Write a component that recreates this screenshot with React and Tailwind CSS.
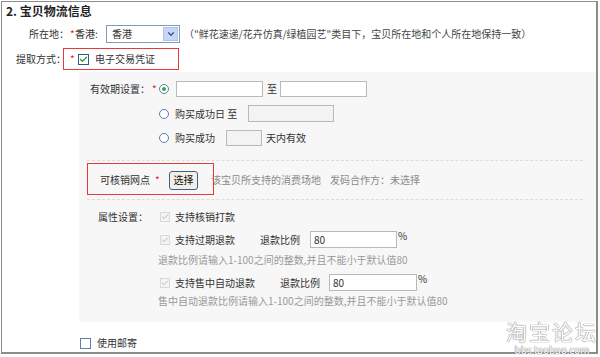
import { Check, ChevronDown } from 'lucide-react';

function Radio({ on }) {
  return (
    <span className="w-[10px] h-[10px] shrink-0 rounded-full border border-[#5b7fb0] bg-white flex items-center justify-center">
      {on && <span className="w-[4px] h-[4px] rounded-full bg-[#2fae3a]" />}
    </span>
  );
}

function GrayCheck() {
  return (
    <span className="w-[10px] h-[10px] shrink-0 border border-[#d8d8d8] bg-[#f4f4f4] flex items-center justify-center">
      <Check className="w-[8px] h-[8px] text-[#b8b8b8]" strokeWidth={3} />
    </span>
  );
}

function Field({ w, h = 'h-[16px]', gray, value }) {
  return (
    <span
      className={`${w} ${h} shrink-0 border border-[#b9b9b9] ${gray ? 'bg-[#f3f3f3]' : 'bg-white'} flex items-center pl-[3px] text-[#333]`}
    >
      {value}
    </span>
  );
}

export default function App() {
  return (
    <div className="w-[600px] h-[357px] bg-white relative overflow-hidden whitespace-nowrap text-[10px] leading-[14px] text-[#333] [font-family:'Noto_Sans_CJK_SC','Liberation_Sans',sans-serif]">
      <div className="ml-[1px] mt-[1px] w-[597px] h-[353px] border-l border-t border-r-2 border-b-2 border-[#8c8c8c]">
        {/* Title */}
        <div className="h-[18px] pl-[4px] leading-[18px] text-[12px] font-bold text-[#222]">2. 宝贝物流信息</div>

        {/* Location */}
        <div className="mt-[5px] h-[18px] flex items-center pl-[27px]">
          <span className="w-[41px]">所在地：</span>
          <span className="w-[5px] text-[#e02020]">*</span>
          <span className="w-[31px]">香港:</span>
          <span className="w-[74px] h-[18px] border border-[#7f9db9] bg-white flex items-center justify-between">
            <span className="pl-[5px]">香港</span>
            <span className="w-[15px] h-[14px] mr-[1px] bg-[#c6d6f7] border border-[#b0c4ec] flex items-center justify-center">
              <ChevronDown className="w-[10px] h-[10px] text-[#3c5389]" strokeWidth={3} />
            </span>
          </span>
          <span className="ml-[4px] text-[#444]">（"鲜花速递/花卉仿真/绿植园艺"类目下，宝贝所在地和个人所在地保持一致）</span>
        </div>

        {/* Pickup */}
        <div className="mt-[5px] h-[22px] flex items-center pl-[14px]">
          <span className="w-[47px]">提取方式：</span>
          <span className="h-[22px] w-[116px] border border-[#e63b3b] flex items-center pl-[6px]">
            <span className="w-[6px] text-[#e02020]">*</span>
            <span className="ml-[2px] w-[11px] h-[11px] border border-[#2c5a8c] bg-white flex items-center justify-center">
              <Check className="w-[9px] h-[9px] text-[#21a121]" strokeWidth={3.5} />
            </span>
            <span className="ml-[6px]">电子交易凭证</span>
          </span>
        </div>

        {/* Panel */}
        <div className="mt-[2px] ml-[77px] h-[250px] bg-[#f7f7f7] pt-[9px]">
          <div className="h-[16px] flex items-center">
            <span className="ml-[11px] w-[62px]">有效期设置：</span>
            <span className="w-[7px] text-[#e02020]">*</span>
            <Radio on />
            <span className="ml-[7px]"><Field w="w-[87px]" /></span>
            <span className="ml-[4px] w-[10px]">至</span>
            <span className="ml-[3px]"><Field w="w-[87px]" /></span>
          </div>
          <div className="mt-[8px] h-[17px] flex items-center">
            <span className="ml-[80px]"><Radio /></span>
            <span className="ml-[6px] w-[73px]">购买成功日 至</span>
            <Field w="w-[86px]" h="h-[17px]" gray />
          </div>
          <div className="mt-[8px] h-[16px] flex items-center">
            <span className="ml-[80px]"><Radio /></span>
            <span className="ml-[6px] w-[51px]">购买成功</span>
            <Field w="w-[36px]" gray />
            <span className="ml-[4px]">天内有效</span>
          </div>

          <div className="mt-[14px] ml-[8px] mr-[13px] border-t border-dashed border-[#dcdcdc]" />

          <div className="relative h-[38px] flex items-center">
            <span className="ml-[21px] w-[55px]">可核销网点</span>
            <span className="w-[14px] text-[#e02020]">*</span>
            <span className="w-[29px] h-[19px] shrink-0 rounded-[3px] border border-[#3d5f8a] bg-[#f1f0e8] flex items-center justify-center text-[#111]">选择</span>
            <span className="ml-[13px] text-[#8a8a8a]">该宝贝所支持的消费场地</span>
            <span className="ml-[9px] text-[#8a8a8a]">发码合作方：未选择</span>
            <span className="absolute left-[8px] top-[2px] w-[127px] h-[32px] border border-[#e63b3b]" />
          </div>

          <div className="ml-[8px] mr-[13px] border-t border-dashed border-[#dcdcdc]" />

          <div className="mt-[9px] h-[16px] flex items-center">
            <span className="ml-[19px] w-[62px]">属性设置：</span>
            <GrayCheck />
            <span className="ml-[5px]">支持核销打款</span>
          </div>
          <div className="mt-[6px] h-[17px] flex items-center">
            <span className="ml-[81px]"><GrayCheck /></span>
            <span className="ml-[5px] w-[85px]">支持过期退款</span>
            <span className="w-[50px]">退款比例</span>
            <Field w="w-[87px]" h="h-[17px]" value="80" />
            <span className="ml-[1px] self-start leading-[10px]">%</span>
          </div>
          <div className="mt-[5px] ml-[79px] text-[#999]">退款比例请输入1-100之间的整数,并且不能小于默认值80</div>
          <div className="mt-[7px] h-[17px] flex items-center">
            <span className="ml-[81px]"><GrayCheck /></span>
            <span className="ml-[5px] w-[105px]">支持售中自动退款</span>
            <span className="w-[49px]">退款比例</span>
            <Field w="w-[88px]" h="h-[17px]" value="80" />
            <span className="ml-[1px] self-start leading-[10px]">%</span>
          </div>
          <div className="mt-[3px] ml-[79px] text-[#999]">售中自动退款比例请输入1-100之间的整数,并且不能小于默认值80</div>
        </div>

        {/* Post */}
        <div className="mt-[15px] h-[12px] flex items-center">
          <span className="ml-[78px] w-[11px] h-[11px] border border-[#5b7fb0] bg-white" />
          <span className="ml-[6px]">使用邮寄</span>
        </div>
      </div>

      {/* Watermark */}
      <div className="absolute right-[2px] bottom-[1px] flex flex-col items-center text-white">
        <span className="text-[21px] leading-[24px] tracking-[2px] [text-shadow:0_0_1px_#777,0_0_1px_#777]">淘宝论坛</span>
        <span className="text-[10px] leading-[13px] [text-shadow:0_0_1px_#777,0_0_1px_#777]">bbs.taobao.com</span>
      </div>
    </div>
  );
}
